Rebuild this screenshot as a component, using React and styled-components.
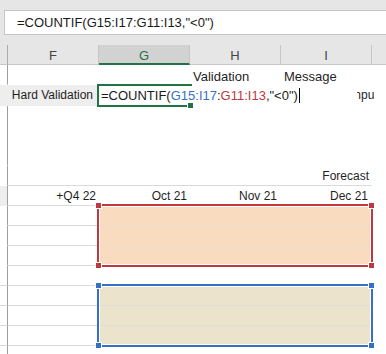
import styled, { createGlobalStyle } from "styled-components";

const GlobalStyle = createGlobalStyle`
  body {
    margin: 0;
    background: #ffffff;
    font-family: "Liberation Sans", Arial, sans-serif;
    overflow: hidden;
  }
`;

const GREEN = "#217346";
const RED = "#c1373f";
const BLUE = "#3670c6";
const ORANGE = "#f9dcbf";
const BEIGE = "#ebe3cc";
const GRID = "#dadada";

const ranges = [
  { top: 139, color: RED },
  { top: 219, color: BLUE },
];

const App = () => {
  return (
    <>
      <GlobalStyle />
      <Top>
        <FormulaBox>=COUNTIF(G15:I17:G11:I13,"&lt;0")</FormulaBox>
      </Top>
      <Header>
        <Corner />
        <HeadCell>F</HeadCell>
        <HeadCell $active>G</HeadCell>
        <HeadCell>H</HeadCell>
        <HeadCell>I</HeadCell>
        <HeadRest />
      </Header>
      <Sheet>
        <Row $h={20}>
          <RowHead />
          <Cell />
          <Cell />
          <Cell $size={13} $dy={2}>Validation</Cell>
          <Cell $size={13} $dy={2}>Message</Cell>
          <Rest />
        </Row>
        <Row $h={21}>
          <RowHead $shade $noLine />
          <Cell $fill="#eeeeee" $align="right" $dy={1} $pr={6}>Hard Validation</Cell>
          <EditCell>
            <EditFrame />
            <EditBox>
              =COUNTIF(<Ref $c={BLUE}>G15:I17</Ref>:<Ref $c={RED}>G11:I13</Ref>,"&lt;0")
              <Caret />
            </EditBox>
            <FillHandle />
          </EditCell>
          <Cell />
          <Cell $pos>
            <Hidden>Input</Hidden>
          </Cell>
          <Rest />
        </Row>
        <Row $h={60}>
          <RowHead />
          <Cell />
          <Cell />
          <Cell />
          <Cell />
          <Rest />
        </Row>
        <Row $h={20}>
          <RowHead />
          <Cell $line={GRID} />
          <Cell $line={GRID} />
          <Cell $line={GRID} />
          <Cell $line={GRID} $align="right" $dy={1}>Forecast</Cell>
          <Rest />
        </Row>
        <Row $h={20}>
          <RowHead $shade />
          <Cell $line={GRID} $align="right" $dy={1}>+Q4 22</Cell>
          <Cell $line={GRID} $align="right" $dy={1}>Oct 21</Cell>
          <Cell $line={GRID} $align="right" $dy={1} $pr={4}>Nov 21</Cell>
          <Cell $line={GRID} $align="right" $dy={1} $pr={4}>Dec 21</Cell>
          <Rest />
        </Row>
        {[0, 1, 2].map((i) => (
          <Row key={"r" + i} $h={20}>
            <RowHead />
            <Cell $line={GRID} />
            <Cell $fill={ORANGE} $line={i < 2 ? "#eedccb" : GRID} />
            <Cell $fill={ORANGE} $line={i < 2 ? "#eedccb" : GRID} />
            <Cell $fill={ORANGE} $line={i < 2 ? "#eedccb" : GRID} />
            <Rest />
          </Row>
        ))}
        <Row $h={20}>
          <RowHead $line={GRID} />
          <Cell $line={GRID} />
          <Cell $line={GRID} />
          <Cell $line={GRID} />
          <Cell $line={GRID} />
          <Rest />
        </Row>
        {[0, 1, 2].map((i) => (
          <Row key={"b" + i} $h={20}>
            <RowHead $line={GRID} />
            <Cell $line={GRID} />
            <Cell $fill={BEIGE} $line={i < 2 ? "#e2ded3" : GRID} />
            <Cell $fill={BEIGE} $line={i < 2 ? "#e2ded3" : GRID} />
            <Cell $fill={BEIGE} $line={i < 2 ? "#e2ded3" : GRID} />
            <Rest />
          </Row>
        ))}
        <Row $h={20}>
          <RowHead />
          <Cell />
          <Cell />
          <Cell />
          <Cell />
          <Rest />
        </Row>
        {ranges.map((r) => (
          <Range key={r.top} $top={r.top} $c={r.color}>
            <Knob $c={r.color} $v="top" $h="left" />
            <Knob $c={r.color} $v="top" $h="right" />
            <Knob $c={r.color} $v="bottom" $h="left" />
            <Knob $c={r.color} $v="bottom" $h="right" />
          </Range>
        ))}
      </Sheet>
    </>
  );
};

const Top = styled.div`
  background: #e6e6e6;
  padding: 10px 0 10px 4px;
`;

const FormulaBox = styled.div`
  height: 25px;
  box-sizing: border-box;
  background: #ffffff;
  border: 1px solid #c6c6c6;
  border-right: none;
  padding: 0 0 0 12px;
  font-size: 13px;
  line-height: 23px;
  color: #1a1a1a;
  white-space: nowrap;
`;

const Header = styled.div`
  display: flex;
  height: 20px;
  background: #e6e6e6;
`;

const Corner = styled.div`
  flex: none;
  width: 8px;
  box-sizing: border-box;
  border-right: 1px solid #ababab;
  border-bottom: 1px solid #c6c6c6;
`;

const HeadCell = styled.div`
  flex: none;
  width: 91px;
  box-sizing: border-box;
  border-right: 1px solid #c6c6c6;
  border-bottom: ${(p) => (p.$active ? `2px solid ${GREEN}` : "1px solid #c6c6c6")};
  background: ${(p) => (p.$active ? "#d2d2d2" : "transparent")};
  color: ${(p) => (p.$active ? GREEN : "#444444")};
  font-size: 13px;
  line-height: 19px;
  padding-top: 1px;
  text-align: center;
`;

const HeadRest = styled.div`
  flex: 1;
  border-bottom: 1px solid #c6c6c6;
`;

const Sheet = styled.div`
  position: relative;
`;

const Row = styled.div`
  display: flex;
  height: ${(p) => p.$h}px;
`;

const RowHead = styled.div`
  flex: none;
  width: 8px;
  box-sizing: border-box;
  border-right: 1px solid ${(p) => (p.$noLine ? "#eeeeee" : "#9e9e9e")};
  border-bottom: 1px solid ${(p) => p.$line || "transparent"};
  background: ${(p) => (p.$shade ? "#eeeeee" : "#ffffff")};
`;

const Cell = styled.div`
  flex: none;
  position: ${(p) => (p.$pos ? "relative" : "static")};
  width: 91px;
  height: 100%;
  box-sizing: border-box;
  padding: ${(p) => p.$dy || 0}px ${(p) => p.$pr || 3}px 0 3px;
  border-bottom: 1px solid ${(p) => p.$line || "transparent"};
  background: ${(p) => p.$fill || "transparent"};
  font-size: ${(p) => p.$size || 12}px;
  line-height: 19px;
  text-align: ${(p) => p.$align || "left"};
  white-space: nowrap;
  color: #1f1f1f;
`;

const Rest = styled.div`
  flex: 1;
`;

const Hidden = styled.span`
  position: absolute;
  left: 70px;
  top: 1px;
  width: 23px;
  overflow: hidden;
  font-size: 12px;
  line-height: 19px;
  white-space: nowrap;
  color: #1f1f1f;
`;

const EditCell = styled.div`
  flex: none;
  position: relative;
  z-index: 2;
  width: 91px;
  height: 100%;
`;

const EditFrame = styled.div`
  position: absolute;
  left: -2px;
  top: -1px;
  width: 95px;
  height: 23px;
  box-sizing: border-box;
  border: 2px solid ${GREEN};
  border-right: none;
`;

const EditBox = styled.div`
  position: absolute;
  left: 0;
  top: 1px;
  width: 258px;
  height: 19px;
  box-sizing: border-box;
  padding-left: 2px;
  background: #ffffff;
  font-size: 13px;
  line-height: 19px;
  white-space: nowrap;
  color: #1a1a1a;
`;

const Ref = styled.span`
  color: ${(p) => p.$c};
`;

const Caret = styled.span`
  display: inline-block;
  width: 1px;
  height: 15px;
  margin-left: 1px;
  vertical-align: -3px;
  background: #000000;
`;

const FillHandle = styled.div`
  position: absolute;
  left: 89px;
  top: 18px;
  width: 5px;
  height: 5px;
  background: ${GREEN};
  box-shadow: 0 0 0 1px #ffffff;
`;

const Range = styled.div`
  position: absolute;
  left: 97px;
  top: ${(p) => p.$top}px;
  width: 276px;
  height: 63px;
  box-sizing: border-box;
  border: 2px solid ${(p) => p.$c};
  box-shadow: inset 0 0 0 1px #ffffff;
`;

const Knob = styled.div`
  position: absolute;
  ${(p) => p.$v}: -3px;
  ${(p) => p.$h}: -3px;
  width: 5px;
  height: 5px;
  background: ${(p) => p.$c};
  box-shadow: 0 0 0 1px #ffffff;
`;

export default App;
